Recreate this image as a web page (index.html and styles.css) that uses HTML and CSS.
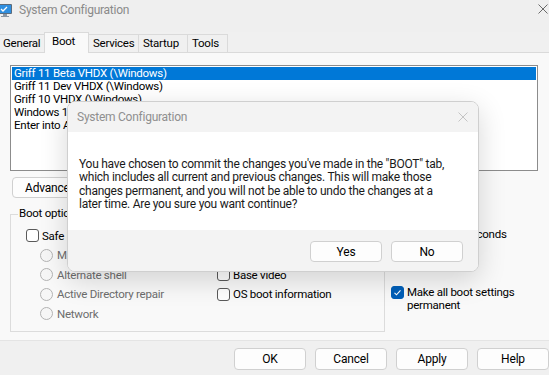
FILE: index.html
```html
<!DOCTYPE html>
<html lang="en">
<head>
    <meta charset="UTF-8">
    <meta name="viewport" content="width=device-width, initial-scale=1.0">
    <title>System Configuration</title>
    <link rel="stylesheet" href="styles.css">
</head>
<body>
    <div class="window">
        <div class="titlebar">
            <svg class="app-icon" width="16" height="16" viewBox="0 0 16 16">
                <rect x="1" y="2" width="14" height="10" rx="1" fill="#5a6b7d"/>
                <rect x="2" y="3" width="12" height="8" fill="#2f8fe0"/>
                <path d="M4 7l2 2 4-4" stroke="#fff" stroke-width="1.3" fill="none"/>
                <rect x="6" y="12" width="4" height="2" fill="#8a96a3"/>
                <rect x="4" y="14" width="8" height="1" fill="#8a96a3"/>
            </svg>
            <span class="title">System Configuration</span>
            <svg class="close" width="10" height="10" viewBox="0 0 10 10">
                <path d="M0.5 0.5l9 9M9.5 0.5l-9 9" stroke="#6a6a6a" stroke-width="1"/>
            </svg>
        </div>

        <div class="tabs">
            <div class="tab general">General</div>
            <div class="tab active">Boot</div>
            <div class="tab services">Services</div>
            <div class="tab startup">Startup</div>
            <div class="tab tools">Tools</div>
        </div>

        <div class="page">
            <div class="listbox">
                <div class="list-item selected">Griff 11 Beta VHDX (\Windows)</div>
                <div class="list-item">Griff 11 Dev VHDX (\Windows)</div>
                <div class="list-item">Griff 10 VHDX (\Windows)</div>
                <div class="list-item">Windows 11 (C:\Windows) : Current OS; Default OS</div>
                <div class="list-item">Enter into Advanced Startup</div>
            </div>

            <div class="actions">
                <button class="btn wide">Advanced options...</button>
                <button class="btn">Set as default</button>
                <button class="btn">Delete</button>
            </div>

            <div class="options-area">
                <div class="group">
                    <span class="group-label">Boot options</span>
                    <div class="group-cols">
                        <div class="col">
                            <label class="check-row"><span class="checkbox"></span>Safe boot</label>
                            <label class="radio-row disabled"><span class="radio"></span>Minimal</label>
                            <label class="radio-row disabled"><span class="radio"></span>Alternate shell</label>
                            <label class="radio-row disabled"><span class="radio"></span>Active Directory repair</label>
                            <label class="radio-row disabled"><span class="radio"></span>Network</label>
                        </div>
                        <div class="col">
                            <label class="check-row"><span class="checkbox"></span>No GUI boot</label>
                            <label class="check-row"><span class="checkbox"></span>Boot log</label>
                            <label class="check-row"><span class="checkbox"></span>Base video</label>
                            <label class="check-row"><span class="checkbox"></span>OS boot information</label>
                        </div>
                    </div>
                </div>

                <div class="side">
                    <div class="timeout-label">Timeout:</div>
                    <div class="timeout-row">
                        <span class="textbox">30</span>
                        <span>seconds</span>
                    </div>
                    <label class="check-row permanent">
                        <span class="checkbox checked">
                            <svg width="9" height="9" viewBox="0 0 9 9"><path d="M1.5 4.8l2 2 4-4.5" stroke="#fff" stroke-width="1.1" fill="none"/></svg>
                        </span>
                        <span>Make all boot settings<br>permanent</span>
                    </label>
                </div>
            </div>
        </div>

        <div class="footer">
            <button class="btn">OK</button>
            <button class="btn">Cancel</button>
            <button class="btn">Apply</button>
            <button class="btn">Help</button>
        </div>
    </div>

    <div class="dialog">
        <div class="dialog-head">
            <span>System Configuration</span>
            <svg width="10" height="10" viewBox="0 0 10 10">
                <path d="M0.5 0.5l9 9M9.5 0.5l-9 9" stroke="#c4c4c4" stroke-width="1"/>
            </svg>
        </div>
        <div class="dialog-body">
            You have chosen to commit the changes you've made in the "BOOT" tab,<br>
            which includes all current and previous changes. This will make those<br>
            changes permanent, and you will not be able to undo the changes at a<br>
            later time. Are you sure you want continue?
        </div>
        <div class="dialog-foot">
            <button class="btn">Yes</button>
            <button class="btn">No</button>
        </div>
    </div>
</body>
</html>
```

FILE: styles.css
```css
body {
    margin: 0;
    width: 549px;
    height: 375px;
    overflow: hidden;
    position: relative;
    background-color: #f0f0f0;
    font-family: Roboto, "Noto Sans", sans-serif;
    font-size: 11.5px;
    letter-spacing: -0.25px;
    color: #000;
}

.titlebar {
    height: 32px;
    display: flex;
    align-items: flex-start;
    background-color: #efefef;
}

.app-icon {
    margin: 2px 0 0 -3px;
}

.title {
    margin-left: 6px;
    line-height: 20px;
    color: #8a8a8a;
    font-size: 12px;
}

.close {
    margin: 4px 1px 0 auto;
}

.tabs {
    display: flex;
    align-items: flex-end;
    height: 20px;
    position: relative;
    z-index: 1;
}

.tab {
    box-sizing: border-box;
    height: 18px;
    line-height: 17px;
    padding-left: 4px;
    border: 1px solid #dadada;
    border-bottom: none;
    margin-right: -1px;
    background-color: #f0f0f0;
    white-space: nowrap;
}

.tab.general {
    border-left: none;
    width: 45px;
    padding-left: 3px;
}

.tab.services { width: 51px; }
.tab.startup { width: 50px; }
.tab.tools { width: 41px; }

.tab.active {
    width: 45px;
    height: 21px;
    line-height: 16px;
    padding-left: 7px;
    background-color: #f9f9f9;
    margin-bottom: -1px;
}

.page {
    height: 275px;
    background-color: #f9f9f9;
    border-top: 1px solid #dadada;
    border-bottom: 1px solid #e4e4e4;
    padding: 12px 0 0 10px;
}

.listbox {
    width: 528px;
    height: 106px;
    box-sizing: border-box;
    border: 1px solid #8c8c8c;
    background-color: #fff;
    padding: 1px;
}

.list-item {
    height: 13px;
    line-height: 13px;
    padding-left: 2px;
    white-space: nowrap;
}

.list-item.selected {
    background-color: #0078d7;
    color: #fff;
}

.actions {
    display: flex;
    gap: 9px;
    margin: 6px 0 0 2px;
}

.btn {
    height: 21px;
    width: 72px;
    padding: 0;
    background-color: #fdfdfd;
    border: 1px solid #d0d0d0;
    border-radius: 4px;
    font-family: inherit;
    font-size: 12px;
    letter-spacing: -0.2px;
    color: #000;
    white-space: nowrap;
}

.btn.wide {
    width: 112px;
    text-align: left;
    padding-left: 12px;
}

.options-area {
    display: flex;
    margin-top: 16px;
}

.group {
    position: relative;
    width: 375px;
    height: 118px;
    box-sizing: border-box;
    border: 1px solid #dcdcdc;
    padding: 11px 0 0 15px;
}

.group-label {
    position: absolute;
    top: -9px;
    left: 7px;
    padding: 0 1px;
    background-color: #f9f9f9;
}

.group-cols {
    display: flex;
}

.col {
    display: flex;
    flex-direction: column;
}

.col:first-child {
    width: 191px;
}

.check-row,
.radio-row {
    display: flex;
    align-items: center;
    height: 19.5px;
    white-space: nowrap;
}

.checkbox {
    flex: none;
    width: 11px;
    height: 11px;
    border: 1px solid #5a5a5a;
    border-radius: 3px;
    background-color: #fff;
    margin-right: 3px;
    display: flex;
    align-items: center;
    justify-content: center;
}

.checkbox.checked {
    background-color: #005fb8;
    border-color: #005fb8;
}

.radio-row {
    padding-left: 14px;
}

.radio {
    width: 11px;
    height: 11px;
    border: 1px solid #b3b3b3;
    border-radius: 50%;
    background-color: #f6f6f6;
    margin-right: 4px;
}

.disabled {
    color: #6d6d6d;
}

.side {
    margin-top: -3px;
    margin-left: 6px;
}

.timeout-label {
    height: 13px;
    line-height: 13px;
    padding-left: 7px;
}

.timeout-row {
    display: flex;
    align-items: center;
    gap: 4px;
    height: 20px;
    padding-left: 7px;
}

.textbox {
    width: 58px;
    height: 18px;
    border: 1px solid #9a9a9a;
    background-color: #fff;
    padding-left: 3px;
    line-height: 18px;
}

.permanent {
    margin-top: 42px;
    align-items: flex-start;
    height: auto;
    line-height: 13px;
}

.footer {
    display: flex;
    justify-content: flex-end;
    gap: 9px;
    padding: 7px 0 0 0;
}

.footer .btn {
    height: 22px;
}

.dialog {
    position: absolute;
    left: 67px;
    top: 101px;
    width: 412px;
    height: 171px;
    box-sizing: border-box;
    border: 1px solid #cfcfcf;
    border-radius: 8px;
    overflow: hidden;
    background-color: #fff;
    box-shadow: 0 8px 28px rgba(0, 0, 0, 0.16);
    display: flex;
    flex-direction: column;
}

.dialog-head {
    height: 30px;
    display: flex;
    align-items: center;
    justify-content: space-between;
    padding: 0 10px 0 9px;
    background-color: #f3f3f3;
    color: #8f8f8f;
    font-size: 12px;
}

.dialog-body {
    flex: 1;
    padding: 26px 10px 0 11px;
    font-size: 12px;
    line-height: 13.3px;
    color: #1a1a1a;
    white-space: nowrap;
}

.dialog-foot {
    height: 41px;
    box-sizing: border-box;
    display: flex;
    justify-content: flex-end;
    gap: 9px;
    padding: 11px 15px 0 0;
    background-color: #f3f3f3;
}
```
